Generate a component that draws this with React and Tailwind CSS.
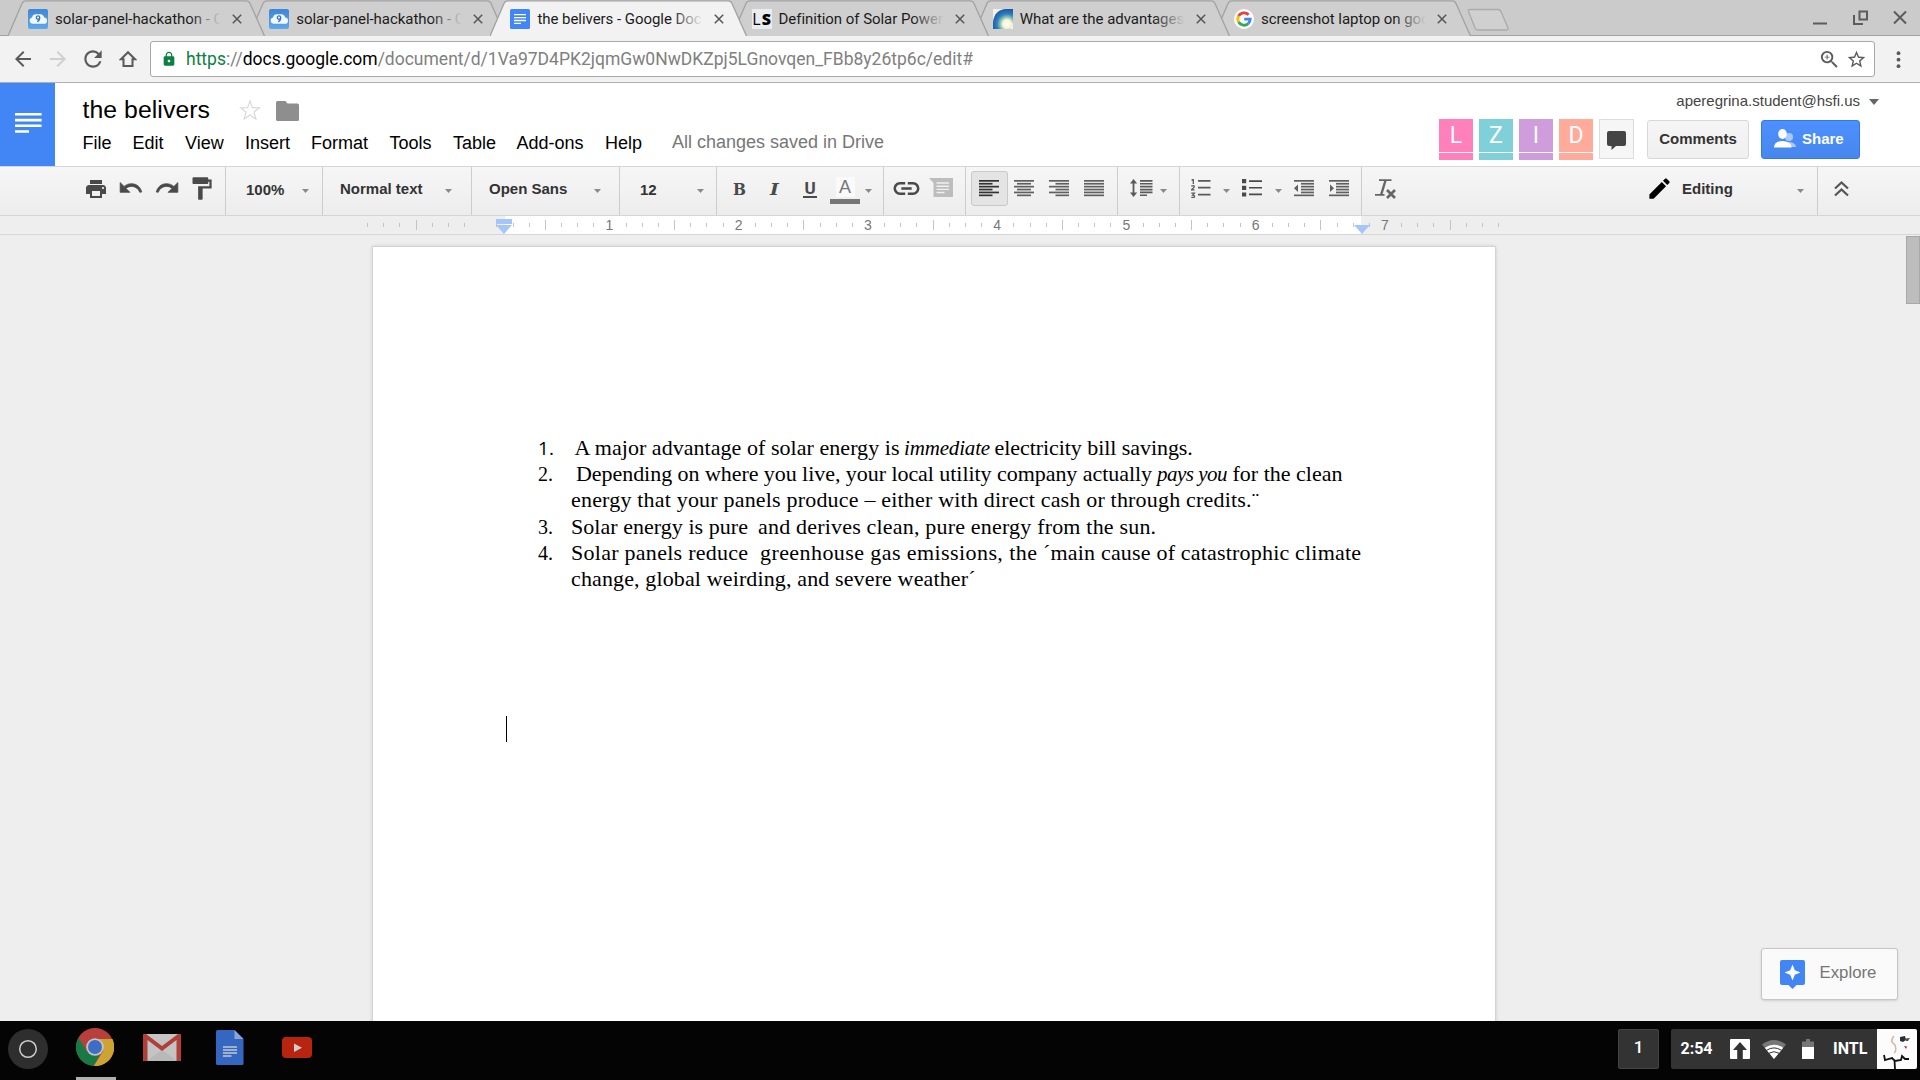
import React from "react";
import {
  MdPrint,
  MdFormatPaint,
  MdLink,
  MdArrowBack,
  MdArrowForward,
  MdRefresh,
  MdHttps,
  MdZoomIn,
  MdStarBorder,
  MdEdit,
} from "react-icons/md";

/* ---------- favicons ---------- */

const CloudIcon = () => (
  <svg className="h-5 w-5" viewBox="0 0 20 20">
    <defs>
      <linearGradient id="sky" x1="0" y1="0" x2="0" y2="1">
        <stop offset="0" stopColor="#3f86d6" />
        <stop offset="1" stopColor="#5fa8ea" />
      </linearGradient>
    </defs>
    <rect width="20" height="20" rx="2" fill="url(#sky)" />
    <path d="M4.5 14.8a3.200 3.200 0 0 1-.4-6.300A4 4 0 0 1 8 5.200h4.500a4 4 0 0 1 3.600 3.200 3.200 3.200 0 0 1-.6 6.400z" fill="#f4f9ff" />
    <circle cx="10" cy="8.600" r="1.700" fill="none" stroke="#3577c8" strokeWidth="1.300" />
    <path d="M11.700 8.600c0 2.400-.9 3.700-2.600 4.100" fill="none" stroke="#3577c8" strokeWidth="1.300" />
  </svg>
);

const DocsIcon = () => (
  <svg className="h-5 w-5" viewBox="0 0 20 20">
    <rect width="20" height="20" rx="1.500" fill="#4285f4" />
    <path d="M4 5.700h12M4 8.600h12M4 11.500h12M4 14.400h7" stroke="#fff" strokeWidth="1.300" />
  </svg>
);

const LsIcon = () => (
  <div className="flex h-5 w-5 items-center justify-center gap-px bg-[#e9edf0] font-['Open_Sans',sans-serif] text-[16px] leading-5 text-black">
    <span>L</span>
    <span className="font-extrabold">S</span>
  </div>
);

const SunIcon = () => (
  <svg className="h-5 w-5" viewBox="0 0 20 20">
    <defs>
      <radialGradient id="sun" cx="0.7" cy="0.75" r="0.85">
        <stop offset="0" stopColor="#fff" />
        <stop offset="0.25" stopColor="#f6f6d0" />
        <stop offset="0.4" stopColor="#8fc3b8" />
        <stop offset="0.6" stopColor="#2d7fbd" />
        <stop offset="1" stopColor="#174a9c" />
      </radialGradient>
    </defs>
    <rect width="20" height="20" fill="#f2f2ec" />
    <path d="M0 20V13C1 5 6 0 13 0h7v13l-3 7z" fill="url(#sun)" />
  </svg>
);

const GoogleIcon = () => (
  <svg className="h-5 w-5" viewBox="0 0 20 20">
    <circle cx="10" cy="10" r="10" fill="#fff" />
    <g fill="none" strokeWidth="2.800">
      <path d="M14.600 5.800A6.200 6.200 0 0 0 4.600 7" stroke="#ea4335" />
      <path d="M4.600 7a6.200 6.200 0 0 0 0 6" stroke="#fbbc05" />
      <path d="M4.600 13a6.200 6.200 0 0 0 9.600 1.600" stroke="#34a853" />
      <path d="M14.200 14.600a6.200 6.200 0 0 0 2-4.400H10.200" stroke="#4285f4" />
    </g>
  </svg>
);

const TABS = [
  { title: "solar-panel-hackathon - C", icon: CloudIcon, z: "z-[5]" },
  { title: "solar-panel-hackathon - C", icon: CloudIcon, z: "z-[4]" },
  { title: "the belivers - Google Doc", icon: DocsIcon, z: "z-[6]", active: true },
  { title: "Definition of Solar Power", icon: LsIcon, z: "z-[3]" },
  { title: "What are the advantages", icon: SunIcon, z: "z-[2]" },
  { title: "screenshot laptop on goo", icon: GoogleIcon, z: "z-[1]" },
];

function Tab({ title, icon: Icon, z, active }) {
  const fade = active
    ? "from-[#f2f2f2]/0 to-[#f2f2f2]"
    : "from-[#cfcfcf]/0 to-[#cfcfcf]";
  return (
    <div className={`relative h-9 w-[241.2px] shrink-0 ${z}`}>
      <svg className="absolute left-0 top-0 h-9 w-[257px]" viewBox="0 0 257 36">
        <path
          d="M0 36 L14 3.500 Q15.200 .8 18 .8 H238 Q240.800 .8 242 3.500 L256.500 36"
          fill={active ? "#f2f2f2" : "#cfcfcf"}
          stroke="#a2a2a2"
          strokeWidth="1.300"
        />
      </svg>
      <div className="relative flex h-9 items-center pl-5 pt-0.5">
        <Icon />
        <div className="relative ml-[7px] w-[165.5px] whitespace-nowrap text-[15px] leading-5 tracking-[-0.045px] text-[#1b1b1b]">
          {title}
          <div className={`absolute -right-2 top-0 h-5 w-10 bg-gradient-to-r ${fade} to-80%`} />
        </div>
        <svg className="ml-[11px] h-[10px] w-[10px]" viewBox="0 0 10 10">
          <path d="M.8.8l8.400 8.400M9.200.8L.8 9.200" stroke="#555" strokeWidth="1.500" />
        </svg>
      </div>
    </div>
  );
}

function TabStrip() {
  return (
    <div className="flex h-9 border-b border-[#a2a2a2] bg-[#cbcbcb] pl-2">
      {TABS.map((t, i) => (
        <Tab key={i} {...t} />
      ))}
      <svg className="ml-[12px] mt-2 h-6 w-[44px]" viewBox="0 0 44 24">
        <path d="M3 1.500h28q2 0 3 2L41 20q.6 2-1.400 2H11q-2 0-3-2L1.500 3.500q-.6-2 1.500-2z" fill="#d0d0d0" stroke="#aaa" strokeWidth="1.300" />
      </svg>
      <div className="ml-auto flex pr-[13px] pt-[10px]">
        <svg className="h-4 w-[94px]" viewBox="0 0 94 16" fill="none" stroke="#5c5c5c">
          <path d="M0 13.500h14" strokeWidth="2" />
          <path d="M46.500 1.500h7.500v8h-7.500z" strokeWidth="2" />
          <path d="M41 5v9h9" strokeWidth="2" />
          <path d="M81 1.500l12 12M93 1.500l-12 12" strokeWidth="2" />
        </svg>
      </div>
    </div>
  );
}

function AddressBar() {
  return (
    <div className="flex h-[47px] items-start border-b border-[#b0b0b0] bg-[#f2f2f2] text-[#5a5a5a]">
      <MdArrowBack className="ml-[11px] mt-[11px]" size={24} />
      <MdArrowForward className="ml-[11px] mt-[11px] text-[#cfcfcf]" size={24} />
      <MdRefresh className="ml-[10px] mt-[10px]" size={26} />
      <svg className="ml-[13px] mt-[14px] h-[18px] w-[18px]" viewBox="0 0 18 18">
        <path d="M9 2.200L2 9.200h2.500V16h9V9.200H16z" fill="none" stroke="#5a5a5a" strokeWidth="2" />
      </svg>
      <div className="ml-[13px] mt-[5px] flex h-[36px] w-[1725px] items-center rounded-[3px] border border-[#a9a9a9] bg-white text-[#808080]">
        <MdHttps className="ml-[10px] text-[#0b8043]" size={16} />
        <div className="ml-[9px] whitespace-nowrap text-[17.5px] leading-6">
          <span className="text-[#0b8043]">https</span>://
          <span className="text-black">docs.google.com</span>
          /document/d/1Va97D4PK2jqmGw0NwDKZpj5LGnovqen_FBb8y26tp6c/edit#
        </div>
        <MdZoomIn className="ml-auto text-[#5a5a5a]" size={23} />
        <MdStarBorder className="ml-[5px] mr-[7px] text-[#5a5a5a]" size={21} />
      </div>
      <svg className="ml-[21px] mt-[15px] h-[18px] w-[5px]" viewBox="0 0 5 18" fill="#5a5a5a">
        <circle cx="2.500" cy="2.200" r="1.900" />
        <circle cx="2.500" cy="8.700" r="1.900" />
        <circle cx="2.500" cy="15.200" r="1.900" />
      </svg>
    </div>
  );
}

/* ---------- document header ---------- */

const MENU = [
  ["File", "w-[50px]"],
  ["Edit", "w-[52.5px]"],
  ["View", "w-[60px]"],
  ["Insert", "w-[66px]"],
  ["Format", "w-[78.5px]"],
  ["Tools", "w-[63.5px]"],
  ["Table", "w-[63.5px]"],
  ["Add-ons", "w-[88.5px]"],
  ["Help", "w-[67px]"],
];

const PEOPLE = [
  ["L", "bg-[#ff80ba]"],
  ["Z", "bg-[#80d0da]"],
  ["I", "bg-[#cf9ddb]"],
  ["D", "bg-[#ffab9c]"],
];

function DocHeader() {
  return (
    <div className="flex h-[83px] bg-white">
      <div className="h-[83px] w-[55px] bg-[#4285f4]">
        <svg className="ml-[15px] mt-[30px] h-5 w-[27px]" viewBox="0 0 27 20" fill="#fff">
          <path d="M0 0h26.600v2.600H0zM0 5.800h26.600v2.600H0zM0 11.500h26.600v2.600H0zM0 17.200h14v2.600H0z" />
        </svg>
      </div>
      <div className="flex-1 pl-[27.5px] pt-[10px]">
        <div className="flex h-[34px] items-center">
          <span className="w-[156.5px] text-[24.8px] leading-8 tracking-[0.06px] text-black">the belivers</span>
          <svg className="mt-px h-[23px] w-[22px]" viewBox="0 0 22 23">
            <path d="M11 2l2.400 6.600 7 .2-5.500 4.400 2 6.900L11 16l-5.900 4.100 2-6.900L1.600 8.800l7-.2z" fill="none" stroke="#d9d9d9" strokeWidth="1.200" />
          </svg>
          <svg className="ml-[15px] mt-px h-5 w-[23px]" viewBox="0 0 23 20">
            <path d="M0 1.500Q0 0 1.500 0h8l2 2.500H21.500Q23 2.500 23 4v14.500Q23 20 21.500 20h-20Q0 20 0 18.500z" fill="#8e8e8e" />
          </svg>
        </div>
        <div className="mt-[4px] flex text-[18px] leading-6 text-black">
          {MENU.map(([label, w]) => (
            <span key={label} className={`${w} whitespace-nowrap`}>
              {label}
            </span>
          ))}
          <span className="-mt-px whitespace-nowrap text-[#777]">All changes saved in Drive</span>
        </div>
      </div>
      <div className="w-[481px]">
        <div className="mt-[8px] flex h-5 items-center justify-end pr-[41px] text-[15px] leading-5 text-[#444]">
          aperegrina.student@hsfi.us
          <svg className="ml-[9px] mt-[2px] h-[6px] w-[10px]" viewBox="0 0 10 6">
            <path d="M0 0h10L5 6z" fill="#666" />
          </svg>
        </div>
        <div className="mt-[8px] flex items-start">
          {PEOPLE.map(([letter, color]) => (
            <div key={letter} className="mr-[6px] w-[34px]">
              <div className={`flex h-[33px] items-center justify-center pt-px font-['Roboto',sans-serif] text-[23px] text-white ${color}`}>
                {letter}
              </div>
              <div className={`mt-px h-[7px] ${color}`} />
            </div>
          ))}
          <div className="flex h-10 w-[35px] items-center justify-center border border-[#dcdcdc] bg-[#f6f6f6]">
            <svg className="mt-[3px] h-[19px] w-[19px]" viewBox="0 0 19 19">
              <path d="M2 0h15q2 0 2 2v11q0 2-2 2h-8l-4.500 4V15H2q-2 0-2-2V2Q0 0 2 0z" fill="#444" />
            </svg>
          </div>
          <div className="ml-[13px] mt-px flex h-[39px] w-[102px] items-center justify-center rounded-[3px] border border-[#d8d8d8] bg-gradient-to-b from-[#f5f5f5] to-[#f0f0f0] text-[15px] font-bold text-[#333]">
            Comments
          </div>
          <div className="ml-3 mt-px flex h-[39px] w-[99px] items-center rounded-[3px] border border-[#3079ed] bg-gradient-to-b from-[#4d90fe] to-[#4787ed] pl-3 text-[15px] font-bold text-white">
            <svg className="mb-[2px] h-[19px] w-[22px]" viewBox="0 0 22 19">
              <g fill="#a9c8ff">
                <circle cx="15" cy="8" r="4" />
                <path d="M10 18v-2q2-3 6-3 6 1 6 5z" />
              </g>
              <ellipse cx="8.500" cy="5" rx="4.300" ry="5" fill="#fff" />
              <path d="M0 18.500Q0 12 8.500 12t9 6.500z" fill="#fff" />
            </svg>
            <span className="ml-[6px]">Share</span>
          </div>
        </div>
      </div>
    </div>
  );
}

/* ---------- toolbar ---------- */

const Caret = ({ className = "" }) => (
  <svg className={`mt-[22px] h-1 w-[7px] shrink-0 ${className}`} viewBox="0 0 7 4">
    <path d="M0 0h7L3.500 4z" fill="#8a8a8a" />
  </svg>
);

const HistoryIcon = ({ className = "" }) => (
  <svg className={`h-[26px] w-[26px] shrink-0 ${className}`} viewBox="0 0 24 24" fill="currentColor" stroke="currentColor" strokeWidth="0.7">
    <path d="M12.500 8c-2.650 0-5.050.99-6.900 2.600L2 7v9h9l-3.620-3.620c1.390-1.160 3.160-1.880 5.120-1.880 3.540 0 6.550 2.310 7.600 5.500l1.800-.3C20.800 11 17.150 8 12.500 8z" />
  </svg>
);

const Group = ({ className, children }) => (
  <div className={`flex h-12 shrink-0 items-start border-r border-[#cdcdcd] ${className}`}>{children}</div>
);

const ROWS = [0, 1, 2, 3, 4, 5];

/* six stacked strokes; odd rows are shorter and shifted for the chosen side */
const AlignIcon = ({ className = "", side, color = "#5f5f5f" }) => {
  const inset = { left: 0, center: 3, right: 6.5, full: 0 }[side];
  const short = { left: 13.5, center: 14, right: 13.5, full: 20 }[side];
  return (
    <svg className={`h-[17px] w-5 shrink-0 ${className}`} viewBox="0 0 20 17" fill={color}>
      {ROWS.map((r) => (
        <rect key={r} x={r % 2 ? inset : 0} y={r * 2.9} width={r % 2 ? short : 20} height="1.7" />
      ))}
    </svg>
  );
};

const IndentIcon = ({ className = "", out }) => (
  <svg className={`h-[17px] w-5 shrink-0 ${className}`} viewBox="0 0 20 17" fill="#5f5f5f">
    <rect y="0" width="20" height="1.700" />
    <rect y="14.500" width="20" height="1.700" />
    {[1, 2, 3, 4].map((r) => (
      <rect key={r} x="7" y={r * 2.9} width="13" height="1.7" />
    ))}
    <path d={out ? "M4 4.500v7.500L0 8.200z" : "M1 4.500v7.500l4-3.800z"} />
  </svg>
);

function Toolbar() {
  return (
    <div className="flex h-[50px] items-start border-b border-t border-[#d6d6d6] bg-gradient-to-b from-[#f6f6f6] to-[#ededed] text-[15px] font-bold leading-5 text-[#333]">
      <Group className="w-[226px] text-[#4a4a4a]">
        <MdPrint className="ml-[84px] mt-[10px]" size={24} />
        <HistoryIcon className="ml-[10px] mt-[8px]" />
        <HistoryIcon className="ml-[10px] mt-[8px] -scale-x-100" />
        <MdFormatPaint className="ml-[8px] mt-[8px]" size={27} />
      </Group>
      <Group className="w-[97px]">
        <span className="ml-5 mt-[13px]">100%</span>
        <Caret className="ml-auto mr-[13px]" />
      </Group>
      <Group className="w-[149px]">
        <span className="ml-[17px] mt-[12px]">Normal text</span>
        <Caret className="ml-auto mr-[19.5px]" />
      </Group>
      <Group className="w-[148px]">
        <span className="ml-[17px] mt-[12px]">Open Sans</span>
        <Caret className="ml-auto mr-[18.5px]" />
      </Group>
      <Group className="w-[97px]">
        <span className="ml-5 mt-[13px]">12</span>
        <Caret className="ml-auto mr-[12.5px]" />
      </Group>
      <Group className="w-[167px] text-[#4a4a4a]">
        <span className="ml-[16px] mt-[12px] w-[16px] origin-left scale-x-[0.9] font-['DejaVu_Serif',serif] text-[17px]">B</span>
        <span className="ml-[21px] mt-[12px] w-[16px] origin-left scale-x-110 font-['DejaVu_Serif',serif] text-[17px] italic">I</span>
        <div className="ml-[17px] mt-[11px] w-[14px] text-center">
          <div className="h-[18px] font-['Roboto',sans-serif] text-[17px]">U</div>
          <div className="h-[1.5px] bg-[#4a4a4a]" />
        </div>
        <div className="ml-[13px] mt-[10px] flex w-[30px] flex-col items-center">
          <div className="h-5 w-[19px] bg-[#fafafa] text-center text-[18px] font-normal text-[#777]">A</div>
          <div className="mt-[2px] h-[5px] w-[30px] bg-[#777]" />
        </div>
        <Caret className="ml-[5px]" />
      </Group>
      <Group className="w-[82px] text-[#4a4a4a]">
        <MdLink className="ml-[7px] mt-[6px]" size={31} />
        <svg className="ml-[7px] mt-[11px] h-[19px] w-6 shrink-0" viewBox="0 0 24 19">
          <path d="M0 0h24v19H4.500V5z" fill="#bdbdbd" />
          <path d="M7.500 5h12.500M7.500 8.200h12.500M7.500 11.400h12.500M7.500 14.500h8" stroke="#f0f0f0" strokeWidth="1.400" />
        </svg>
      </Group>
      <Group className="w-[152px]">
        <div className="ml-[5px] mt-[4px] h-[35px] w-[37px] rounded-[3px] border border-[#c9c9c9] bg-[#e4e4e4] pl-[7px] pt-[8px]">
          <AlignIcon side="left" color="#333" />
        </div>
        <AlignIcon className="ml-[6px] mt-[13px]" side="center" />
        <AlignIcon className="ml-[15px] mt-[13px]" side="right" />
        <AlignIcon className="ml-[15px] mt-[13px]" side="full" />
      </Group>
      <Group className="w-[62px]">
        <svg className="ml-[12px] mt-[12px] h-[19px] w-[23px] shrink-0" viewBox="0 0 23 19" fill="#5a5a5a">
          <path d="M3.500 0L7.200 4.500H4.400v9h2.800L3.500 18 0 13.500h2.600v-9H0z" />
          <path d="M10 1h12.500v1.700H10zM10 3.900h12.500v1.700H10zM10 6.800h12.500v1.700H10zM10 9.700h12.500v1.700H10zM10 12.600h12.500v1.700H10zM10 15.500h7v1.500h-7z" />
        </svg>
        <Caret className="ml-[7px]" />
      </Group>
      <Group className="w-[182px]">
        <svg className="ml-[10.5px] mt-[12px] h-5 w-5 shrink-0" viewBox="0 0 20 20" fill="none" stroke="#5a5a5a">
          <path d="M7 1.900h12.500M7 8.700h12.500M7 15.600h12.500" strokeWidth="1.700" />
          <path d="M.5 1.200l1.800-.7V5M.3 7.200q3-1.200 3 .4 0 .9-2.900 3.200h3.200M.3 14.200h3l-1.600 1.900q1.900 0 1.900 1.300t-3.300.9" strokeWidth="1.300" />
        </svg>
        <Caret className="ml-[12px]" />
        <svg className="ml-[12px] mt-[12px] h-[18px] w-5 shrink-0" viewBox="0 0 20 18" fill="#4a4a4a">
          <path d="M0 0h4.200v4.200H0zM0 6.700h4.200v4.200H0zM0 13.400h4.200v4.200H0z" />
          <path d="M7 1.200h13v1.700H7zM7 7.900h13v1.700H7zM7 14.600h13v1.700H7z" />
        </svg>
        <Caret className="ml-[13px]" />
        <IndentIcon className="ml-[12px] mt-[13px]" out />
        <IndentIcon className="ml-[15px] mt-[13px]" />
      </Group>
      <Group className="w-[456px]">
        <svg className="ml-[13px] mt-[12px] h-5 w-[21px] shrink-0" viewBox="0 0 21 20" fill="none" stroke="#666">
          <path d="M4 1.200h12.500M0 15.800h9.500" strokeWidth="1.700" />
          <path d="M10.500 1.500L6.200 15.500" strokeWidth="2.400" />
          <path d="M12 11l8 8M20 11l-8 8" strokeWidth="2.600" />
        </svg>
        <MdEdit className="ml-[250px] mt-[8px] text-black" size={27} />
        <span className="ml-[9px] mt-[12px]">Editing</span>
        <Caret className="ml-auto mr-[13px]" />
      </Group>
      <svg className="ml-[16px] mt-[14px] h-4 w-[15px]" viewBox="0 0 15 16" fill="none" stroke="#555" strokeWidth="2.200">
        <path d="M1 7.500L7.500 1.500 14 7.500M1 14.500L7.500 8.500 14 14.500" />
      </svg>
    </div>
  );
}

/* ---------- ruler ---------- */

function Ruler() {
  return (
    <div className="relative flex h-[19px] border-b border-[#d6d6d6] bg-[#eeeeee]">
      <div className="ml-[505px] w-[856px] bg-white" />
      <div className="absolute left-[359.6px] top-0 flex h-[18px]">
        {Array.from({ length: 71 }, (_, k) => {
          const inch = (k + 1) / 8 - 1;
          return (
            <div key={k} className="flex h-[18px] w-[16.17px] shrink-0 items-center justify-center">
              {k % 8 === 7 ? (
                <span className="-ml-px text-[14px] leading-4 text-[#777]">{inch > 0 ? inch : ""}</span>
              ) : k % 8 === 3 ? (
                <span className="h-[10px] w-px bg-[#c4c4c4]" />
              ) : (
                <span className="h-1 w-px bg-[#c4c4c4]" />
              )}
            </div>
          );
        })}
      </div>
      <svg className="absolute left-[496px] top-[3px] h-[15px] w-4" viewBox="0 0 16 15" fill="#a6c6fb">
        <path d="M0 0h16v5H0zM0 6h16L8 15z" />
      </svg>
      <svg className="absolute left-[1354px] top-[9px] h-[9px] w-4" viewBox="0 0 16 9" fill="#a6c6fb">
        <path d="M0 0h16L8 9z" />
      </svg>
    </div>
  );
}

/* ---------- document ---------- */

const Item = ({ n, sans, children }) => (
  <li className="flex">
    <span className={`w-[33px] shrink-0 ${sans ? "font-['Open_Sans',sans-serif] text-[19px]" : "text-[20px]"}`}>{n}.</span>
    <div className="whitespace-nowrap">{children}</div>
  </li>
);

function Document() {
  return (
    <div className="flex h-[787px] items-start overflow-hidden bg-[#eeeeee]">
      <div className="ml-[373px] mt-[12px] h-[800px] w-[1122px] bg-white pt-[188px] shadow-[0_0_0_1px_#d3d3d3,0_0_4px_rgba(0,0,0,0.25)]">
        <ol className="ml-[165px] font-['Liberation_Serif',serif] text-[22px] leading-[26.2px] text-black">
          <Item n={1} sans>
            <div className="flex pl-[3.5px]">
              <span className="w-[329.5px] tracking-[0.045px]">A major advantage of solar energy is</span>
              <i className="w-[90.5px] text-[21px] tracking-[-0.17px]">immediate</i>
              <span className="tracking-[-0.06px]">electricity bill savings.</span>
            </div>
          </Item>
          <Item n={2}>
            <div className="flex pl-[5px]">
              <span className="w-[581px] tracking-[-0.05px]">Depending on where you live, your local utility company actually</span>
              <i className="w-[75.5px] text-[21px] tracking-[-0.5px]">pays you</i>
              <span>for the clean</span>
            </div>
            <div className="tracking-[0.19px]">energy that your panels produce – either with direct cash or through credits.¨</div>
          </Item>
          <Item n={3}>
            <div className="flex">
              <span className="w-[187px] tracking-[0.04px]">Solar energy is pure</span>
              <span className="tracking-[0.19px]">and derives clean, pure energy from the sun.</span>
            </div>
          </Item>
          <Item n={4}>
            <div className="flex">
              <span className="w-[189px] tracking-[0.27px]">Solar panels reduce</span>
              <span className="w-[283px] tracking-[0.42px]">greenhouse gas emissions, the</span>
              <span className="tracking-[0.19px]">´main cause of catastrophic climate</span>
            </div>
            <div className="tracking-[0.13px]">change, global weirding, and severe weather´</div>
          </Item>
        </ol>
        <div className="ml-[132.5px] mt-[124px] h-[26px] w-px bg-black" />
      </div>
      <div className="ml-auto flex h-full flex-col items-end">
        <div className="mt-px h-[68px] w-[14px] border border-[#a8a8a8] bg-[#bdbdbd]" />
        <div className="mb-[21px] mr-[22px] mt-auto flex h-[52px] w-[137px] items-center rounded-[3px] border border-[#c6c6c6] bg-[#fafafa] shadow-sm">
          <svg className="ml-[18px] h-[29px] w-[25px]" viewBox="0 0 25 29">
            <path d="M2 0h21q2 0 2 2v21q0 2-2 2h-6.500l-4 4-4-4H2q-2 0-2-2V2Q0 0 2 0z" fill="#4285f4" />
            <path d="M12.500 4.500l2.300 5.800 5.700 2.200-5.700 2.300-2.300 5.700-2.300-5.700-5.700-2.300 5.700-2.200z" fill="#fff" />
          </svg>
          <span className="ml-[14.5px] pb-[3px] text-[16.8px] text-[#757575]">Explore</span>
        </div>
      </div>
    </div>
  );
}

/* ---------- shelf ---------- */

function Shelf() {
  return (
    <div className="flex h-[59px] items-start bg-[#040404] font-['Roboto',sans-serif] text-white">
      <svg className="ml-2 mt-2 h-10 w-10" viewBox="0 0 40 40">
        <circle cx="20" cy="20" r="20" fill="#2e2e2e" />
        <circle cx="20" cy="20" r="8.300" fill="none" stroke="#ccc" strokeWidth="1.500" />
      </svg>
      <div className="ml-7 flex h-[59px] w-10 flex-col items-center justify-between">
        <svg className="-ml-[2px] mt-[7px] h-[38px] w-[38px]" viewBox="0 0 38 38">
          <circle cx="19" cy="19" r="19" fill="#b9403a" />
          <path d="M2.500 9.500A19 19 0 0 0 17.500 38l8-14.500L19 27 10.800 23.500z" fill="#177a45" />
          <path d="M36.500 11A19 19 0 0 1 17.800 38L27.200 23 26 14.500 19 11z" fill="#cda434" />
          <circle cx="19" cy="19" r="8.800" fill="#c4c4c4" />
          <circle cx="19" cy="19" r="7" fill="#3f6cc4" />
        </svg>
        <div className="h-[3px] w-10 bg-[#b0b0b0]" />
      </div>
      <svg className="ml-[27px] mt-[13px] h-[27px] w-[38px]" viewBox="0 0 38 27">
        <rect width="38" height="27" rx="1.500" fill="#c4c4c4" />
        <path d="M4 27L19 16l15 11z" fill="#b8b8b8" />
        <path d="M0 1.500Q0 0 1.500 0H3l16 12L35 0h1.500Q38 0 38 1.500v24Q38 27 36.500 27H33.500V6L19 17 4.500 6V27h-3Q0 27 0 25.500z" fill="#b03f38" />
      </svg>
      <svg className="ml-[35px] mt-[9px] h-[35px] w-[28px]" viewBox="0 0 28 35">
        <path d="M1.500 0H18.500L27.500 9v24.500q0 1.500-1.500 1.500H1.500Q0 35 0 33.500v-32Q0 0 1.500 0z" fill="#3567c0" />
        <path d="M18.500 0v9h9z" fill="#8aa6d8" />
        <path d="M7 17h14M7 20h14M7 23h14M7 26h8.500" stroke="#c4c9d4" strokeWidth="1.400" />
      </svg>
      <svg className="ml-[38px] mt-4 h-[21px] w-[30px]" viewBox="0 0 30 21">
        <rect width="30" height="21" rx="4" fill="#b8240f" />
        <path d="M12 6.500v8.500l8-4.200z" fill="#cfcfcf" />
      </svg>
      <div className="ml-auto mt-2 flex h-10 w-[41px] items-center justify-center rounded-[2px] border border-[#444] bg-[#333] pb-[2px] text-[17px] font-medium">
        1
      </div>
      <div className="ml-3 mr-[3px] mt-2 flex h-10 w-[246px] items-center overflow-hidden rounded-[2px] bg-[#333] text-[16px] font-bold">
        <span className="ml-[9.5px] w-[49.5px]">2:54</span>
        <svg className="h-5 w-5" viewBox="0 0 20 20">
          <rect width="20" height="20" rx="1" fill="#fff" />
          <path d="M10 3l7 8h-4.200v9H7.200v-9H3z" fill="#333" />
        </svg>
        <svg className="ml-3 h-[19px] w-6" viewBox="0 0 24 19">
          <path d="M12 19L0 4.500Q12-4.500 24 4.500z" fill="#777" />
          <path d="M12 19L2.800 7.800Q12 1.500 21.200 7.800z" fill="#fff" />
          <path d="M4.500 10.300Q12 5.500 19.500 10.300M7 13.200q5-3 10 0" fill="none" stroke="#333" strokeWidth="1" />
        </svg>
        <svg className="ml-4 h-5 w-3" viewBox="0 0 12 20">
          <path d="M4 0h4v2.500h4V8H0V2.500h4z" fill="#777" />
          <rect y="8" width="12" height="12" fill="#fff" />
        </svg>
        <span className="ml-[19px] w-[44px]">INTL</span>
        <svg className="h-10 w-10 shrink-0" viewBox="0 0 40 40">
          <rect width="40" height="40" fill="#fcfcfc" />
          <path d="M17 7q-3 3-2 6l3 3q2 6-1 8" fill="none" stroke="#d9b5a2" strokeWidth="1.500" />
          <path d="M23 8l5-1 1 4-3 2-3-1z" fill="#2b3036" />
          <path d="M28 9.500l5-.5-2 3-2 0z" fill="#4a5560" />
          <path d="M27 17l3 .5-1 2.500z" fill="#a03030" />
          <path d="M7 26l1 5 7-2 3 3 6-1 1-4 3 3 4 0M12 30l4-1M17.500 31l.5 9" fill="none" stroke="#111" strokeWidth="1.800" />
        </svg>
      </div>
    </div>
  );
}

export default function App() {
  return (
    <div className="flex h-[1080px] w-[1920px] flex-col overflow-hidden bg-[#eeeeee] font-['Liberation_Sans',sans-serif]">
      <div className="font-['Roboto',sans-serif]">
        <TabStrip />
        <AddressBar />
      </div>
      <DocHeader />
      <Toolbar />
      <Ruler />
      <Document />
      <Shelf />
    </div>
  );
}
